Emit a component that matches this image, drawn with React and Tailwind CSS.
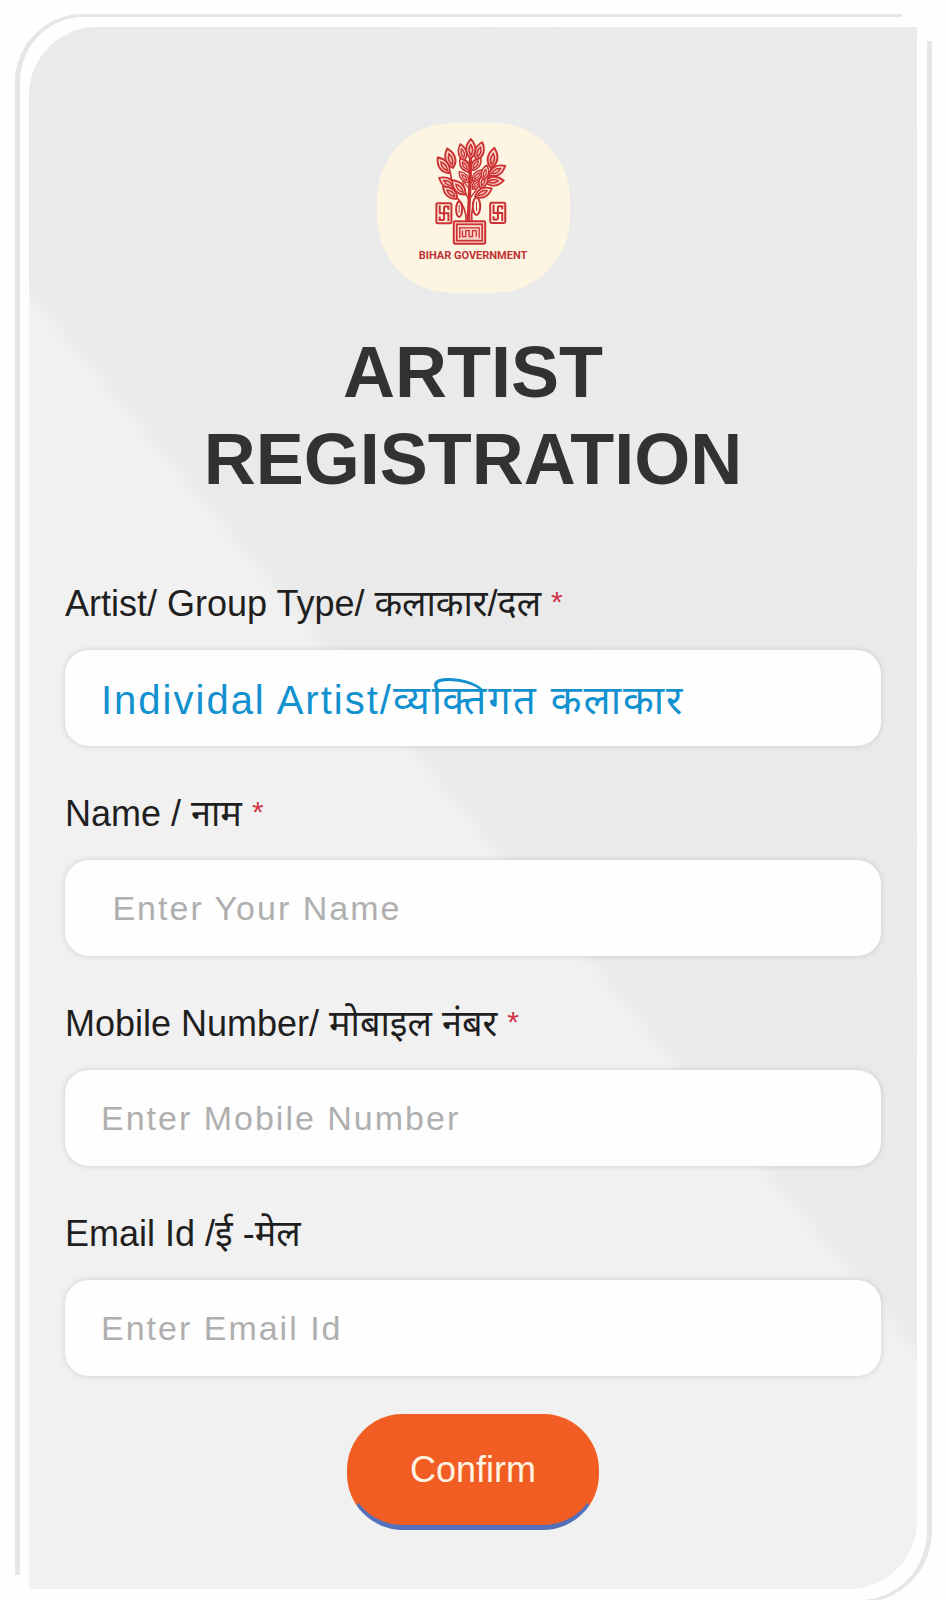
import React, { useState } from 'react';

// base x, base y, rotation, scale
const leaves = [
    [308, 224, 38, 0.8],
    [296, 204, -40, 0.85],
    [308, 198, 46, 0.9],
    [296, 172, -32, 0.95],
    [306, 168, 34, 0.95],
    [284, 138, -14, 1],
    [320, 136, 18, 1.1],
    [303, 132, 0, 1.15],
    [250, 160, -17, 1.2],
    [238, 176, -36, 1.15],
    [363, 160, 10, 1.2],
    [358, 182, 60, 1.1],
    [346, 202, 86, 1.1],
    [316, 246, 64, 1.1],
    [256, 218, -60, 1.1],
    [262, 252, -50, 1.1],
    [286, 240, -42, 1.15],
    [332, 222, 20, 1],
    [340, 196, 14, 0.9],
];

const KeySquare = ({ x, y }) => (
    <g transform={`translate(${x} ${y})`} fill="none" stroke="#cb3132" strokeWidth="6">
        <rect x="2" y="2" width="45" height="60" rx="4" />
        <path d="M12 8V32H38V56M25 12V52M25 12H38V22M25 52H12V42" />
    </g>
);

const Emblem = () => (
    <svg viewBox="148 68 326 326" className="h-[109px] w-[109px]" aria-hidden="true">
        <g fill="none" stroke="#cb3132" strokeLinecap="round">
            <path d="M297 320C294 285 302 250 302 128" strokeWidth="10" />
            <path d="M289 320C290 300 286 275 262 250C240 230 250 200 240 170" strokeWidth="5" />
            <path d="M306 320C304 300 306 262 330 234C352 210 356 190 365 158" strokeWidth="5" />
            <path d="M300 264C288 240 280 220 278 190M302 250C310 236 322 228 326 210M300 225L284 205M302 206L322 190M302 180L286 165M302 170L318 156M340 218L352 200M350 200L362 180M250 214L242 200M302 150L284 134M303 148L322 132" strokeWidth="4" />
            <ellipse cx="268" cy="284" rx="9" ry="23" strokeWidth="6" fill="#fdf4e1" />
            <ellipse cx="320" cy="275" rx="11" ry="26" strokeWidth="6" fill="#fdf4e1" />
            <path d="M268 272V294M320 262V288" strokeWidth="3" />
        </g>
        {leaves.map(([x, y, angle, scale], index) => (
            <g key={index} transform={`translate(${x} ${y}) rotate(${angle}) scale(${scale})`}>
                <path d="M0 0C-17 -14 -15 -34 0 -50C15 -34 17 -14 0 0Z" fill="#fbdcd0" stroke="#cb3132" strokeWidth="5" />
                <path d="M0 -8C-7 -18 -7 -26 0 -36C7 -26 7 -18 0 -8Z" fill="#f3b5a8" stroke="#cb3132" strokeWidth="4" />
            </g>
        ))}
        <KeySquare x={198} y={264} />
        <KeySquare x={359} y={263} />
        <g fill="none" stroke="#cb3132" strokeWidth="6">
            <rect x="252" y="320" width="94" height="67" rx="5" fill="#f8d5c8" />
            <rect x="261" y="329" width="76" height="49" strokeWidth="5" />
            <path d="M270 370V340H328V370M278 348V366H288V348H298V366H308V348H319V366" strokeWidth="4" />
        </g>
    </svg>
);

const inputStyle = "h-24 w-full rounded-[24px] bg-[#fefefe] px-9 shadow-[0_0_6px_rgba(0,0,0,0.14)] outline-none";
const placeholderStyle = "text-[34px] tracking-[2px] text-[#333333] placeholder:text-[#afafaf]";

const Field = ({ id, label, required, children }) => (
    <div className="flex flex-col gap-[19px]">
        <label htmlFor={id} className="whitespace-nowrap text-[36px] leading-[54px] text-[#1f1f1f]">
            {label}
            {required && (
                <>
                    {' '}
                    <span className="align-[4px] text-[30px] leading-none text-[#d0364c]">*</span>
                </>
            )}
        </label>
        {children}
    </div>
);

const App = () => {
    const [form, setForm] = useState({ type: 'individual', name: '', mobile: '', email: '' });

    const handleChange = (e) => {
        setForm({ ...form, [e.target.name]: e.target.value });
    };

    return (
        <main className="overflow-hidden bg-[#fefefe] pt-[27px] pr-[29px] pb-3 pl-[29px] font-['Liberation_Sans','Noto_Sans','Noto_Sans_Devanagari',sans-serif]">
            <div className="relative">
                {/* Offset outlines behind the card */}
                <div className="absolute -top-[13px] right-[15px] bottom-[14px] -left-[14px] rounded-tl-[68px] border-t-[3px] border-l-[5px] border-[#e6e6e6]" />
                <div className="absolute top-[14px] -right-[15px] -bottom-[14px] left-[15px] rounded-br-[72px] border-r-[5px] border-b-[3px] border-[#e6e6e6]" />

                <form
                    className="relative flex flex-col items-center rounded-tl-[68px] rounded-br-[68px] bg-[linear-gradient(230deg,#ebebeb_0%,#eaeaea_50%,#f1f1f1_51%,#f1f1f1_100%)] px-9 pt-24 pb-[59px] shadow-[0_0_0_8px_#fefefe]"
                    onSubmit={(e) => e.preventDefault()}
                >
                    <div className="flex h-[170px] w-[193px] flex-col items-center rounded-[76px] bg-[#fdf4e1] pt-[14px]">
                        <Emblem />
                        <span className="whitespace-nowrap font-[Roboto,'Liberation_Sans',sans-serif] text-[11px] leading-[20px] font-bold text-[#c23335]">
                            BIHAR GOVERNMENT
                        </span>
                    </div>

                    <h1 className="mt-9 w-full text-center text-[72px] leading-[87px] font-bold text-[#323232]">
                        ARTIST
                        <br />
                        REGISTRATION
                    </h1>

                    <div className="mt-[74px] flex w-full flex-col gap-[41px]">
                        <Field id="type" label="Artist/ Group Type/ कलाकार/दल" required>
                            <select
                                id="type"
                                name="type"
                                value={form.type}
                                onChange={handleChange}
                                className={`${inputStyle} appearance-none pt-1 text-[40px] tracking-[2px] text-[#1191cf]`}
                            >
                                <option value="individual">Individal Artist/व्यक्तिगत कलाकार</option>
                            </select>
                        </Field>
                        <Field id="name" label="Name / नाम" required>
                            <input
                                id="name"
                                name="name"
                                type="text"
                                placeholder=" Enter Your Name"
                                value={form.name}
                                onChange={handleChange}
                                className={`${inputStyle} ${placeholderStyle} whitespace-pre`}
                            />
                        </Field>
                        <Field id="mobile" label="Mobile Number/ मोबाइल नंबर" required>
                            <input
                                id="mobile"
                                name="mobile"
                                type="tel"
                                placeholder="Enter Mobile Number"
                                value={form.mobile}
                                onChange={handleChange}
                                className={`${inputStyle} ${placeholderStyle}`}
                            />
                        </Field>
                        <Field id="email" label="Email Id /ई -मेल">
                            <input
                                id="email"
                                name="email"
                                type="email"
                                placeholder="Enter Email Id"
                                value={form.email}
                                onChange={handleChange}
                                className={`${inputStyle} ${placeholderStyle}`}
                            />
                        </Field>
                    </div>

                    <button
                        type="submit"
                        className="mt-[38px] h-[116px] w-[252px] cursor-pointer rounded-[56px] border-x-2 border-b-[5px] border-x-[#f15d22] border-b-[#5470bb] bg-[#f15d22] text-[36px] text-[#fff3e2]"
                    >
                        Confirm
                    </button>
                </form>
            </div>
        </main>
    );
};

export default App;
